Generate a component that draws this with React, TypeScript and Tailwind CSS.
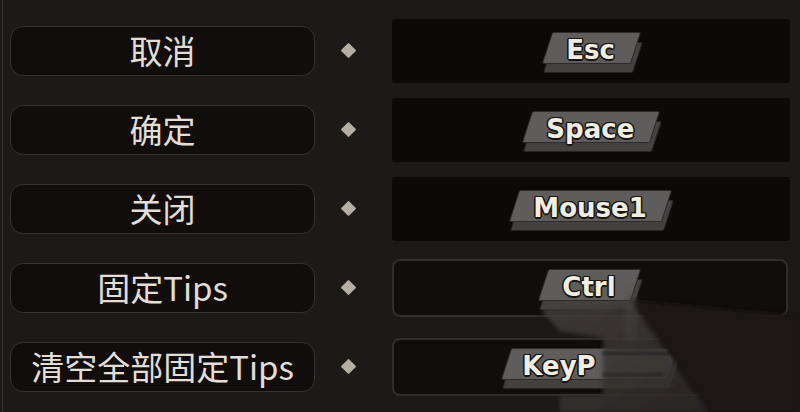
import React from 'react';

interface Binding {
  action: string;
  keyName: string;
  framed?: boolean;
  padRight?: number;
}

const bindings: Binding[] = [
  { action: '取消', keyName: 'Esc' },
  { action: '确定', keyName: 'Space' },
  { action: '关闭', keyName: 'Mouse1' },
  { action: '固定Tips', keyName: 'Ctrl', framed: true },
  { action: '清空全部固定Tips', keyName: 'KeyP', framed: true, padRight: 76 },
];

const KeyCap = ({ label, padRight }: { label: string; padRight?: number }) => (
  <div className="relative pb-[9px] translate-y-[2px]">
    {/* slab thickness */}
    <div className="absolute left-[1px] right-[-2px] top-[10px] bottom-0 skew-x-[-18deg] rounded-[2px] bg-[#434240] border border-[#262524]" />
    <div
      className="relative h-[32px] pl-[19px] pr-[19px] flex items-center skew-x-[-18deg] rounded-[2px] bg-[#5e5d5b] border border-[#2c2b2a]"
      style={padRight ? { paddingRight: padRight, paddingLeft: 16 } : undefined}
    >
      <span className="skew-x-[18deg] translate-y-[2px] text-[26px] leading-[32px] font-bold text-[#f1ede1] font-['DejaVu_Sans',sans-serif] [text-shadow:1.5px_0_0_#161514,-1.5px_0_0_#161514,0_1.5px_0_#161514,0_-1.5px_0_#161514,1px_1px_0_#161514,-1px_-1px_0_#161514,1px_-1px_0_#161514,-1px_1px_0_#161514]">
        {label}
      </span>
    </div>
  </div>
);

const Row = ({ action, keyName, framed, padRight }: Binding) => (
  <div className="flex items-center h-[79px]">
    <div className="w-[305px] h-[50px] flex items-center justify-center rounded-[13px] border-[1.5px] border-[#37322f] bg-[#100d0c]">
      <span className="text-[33px] leading-none text-[#e2ded6] font-['Noto_Sans_CJK_SC','Noto_Sans',sans-serif]">
        {action}
      </span>
    </div>
    <div className="w-[77px] flex items-center">
      <div className="ml-[28px] w-[11px] h-[11px] rotate-45 rounded-[1px] bg-[#b4aea4]" />
    </div>
    {framed ? (
      <div className="w-[396px] h-[58px] flex items-center justify-center rounded-[8px] border-2 border-[#322d2a] bg-[#110d0c]">
        <KeyCap label={keyName} padRight={padRight} />
      </div>
    ) : (
      <div className="w-[398px] h-[64px] flex items-center justify-center rounded-[3px] bg-[#0c0908]">
        <KeyCap label={keyName} />
      </div>
    )}
  </div>
);

export default function App() {
  return (
    <div className="relative w-[800px] h-[412px] overflow-hidden bg-[#1d1917] pl-[2px]">
      <div className="h-full border-l border-[#36302d] pl-[7px] pt-[11px]">
        {bindings.map((b) => (
          <Row key={b.action} {...b} />
        ))}
      </div>

      {/* blurred mouse cursor passing over the lower keys */}
      <svg className="absolute inset-0 pointer-events-none" width="800" height="412" viewBox="0 0 800 412">
        <defs>
          <filter id="soft" x="-30%" y="-30%" width="160%" height="160%">
            <feGaussianBlur stdDeviation="4" />
          </filter>
          <filter id="softer" x="-30%" y="-30%" width="160%" height="160%">
            <feGaussianBlur stdDeviation="2" />
          </filter>
          <linearGradient id="band" x1="0" y1="0" x2="1" y2="1">
            <stop offset="0" stopColor="#45403d" />
            <stop offset="1" stopColor="#2b2725" />
          </linearGradient>
        </defs>
        <polygon points="630,300 800,316 800,412 708,412" fill="#1a1615" filter="url(#softer)" />
        <polygon
          points="540,309 632,303 708,412 560,412 560,395 603,395 603,338 560,331"
          fill="url(#band)"
          opacity="0.85"
          filter="url(#softer)"
        />
        <rect x="603" y="352" width="66" height="3" fill="#161312" opacity="0.75" filter="url(#softer)" />
        <rect x="603" y="373" width="58" height="3" fill="#161312" opacity="0.65" filter="url(#softer)" />
        <rect x="626" y="292" width="10" height="48" fill="#4a4643" opacity="0.5" filter="url(#soft)" />
      </svg>
    </div>
  );
}
